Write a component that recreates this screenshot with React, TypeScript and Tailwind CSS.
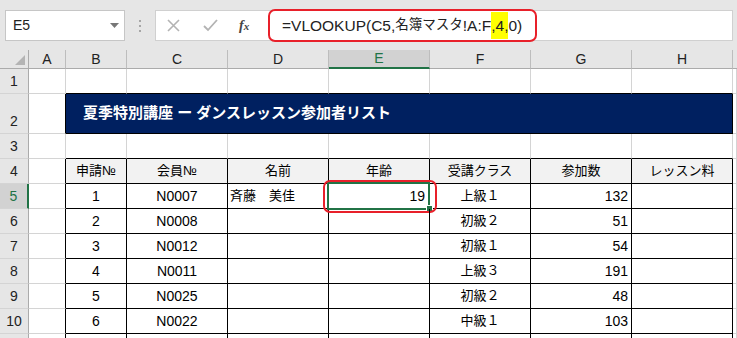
import { FC } from 'react';

const font = "font-['Liberation_Sans','Noto_Sans_CJK_JP',sans-serif]";

// widths of A..H, the row header comes first
const colW = ['w-[37px]', 'w-[61px]', 'w-[101px]', 'w-[101px]', 'w-[101px]', 'w-[101px]', 'w-[101px]', 'w-[101px]'];
const letters = ['A', 'B', 'C', 'D', 'E', 'F', 'G', 'H'];

const gray = 'border-r border-b border-[#d4d4d4]';
const black = 'border-r border-b border-black';
const blackBottom = 'border-r border-b border-r-[#d4d4d4] border-b-black';
const blackRight = 'border-r border-b border-r-black border-b-[#d4d4d4]';

const data = [
	['1', 'N0007', '斉藤　美佳', '19', '上級１', '132'],
	['2', 'N0008', '', '', '初級２', '51'],
	['3', 'N0012', '', '', '初級１', '54'],
	['4', 'N0011', '', '', '上級３', '191'],
	['5', 'N0025', '', '', '初級２', '48'],
	['6', 'N0022', '', '', '中級１', '103'],
];

const heads = ['申請№', '会員№', '名前', '年齢', '受講クラス', '参加数', 'レッスン料'];

const RowHead: FC<{ n: string; h: string; sel?: boolean; bottom?: boolean }> = ({ n, h, sel, bottom }) => (
	<div
		className={`w-[29px] shrink-0 ${h} flex justify-center text-[14px] border-b border-b-[#d4d4d4] ${
			bottom ? 'items-end pb-[1px]' : 'items-center'
		} ${
			sel
				? 'bg-[#d2d2d2] text-[#217346] border-r-2 border-r-[#217346]'
				: 'bg-[#e6e6e6] text-[#222] border-r border-r-[#ababab]'
		}`}
	>
		{n}
	</div>
);

const Toolbar: FC = () => (
	<div className="h-[50px] bg-[#e6e6e6] flex items-start pt-[10px] pl-[5px]">
		<div className="w-[120px] h-[31px] bg-white border border-[#c6c6c6] flex items-center justify-between pl-[7px] pr-[5px]">
			<span className="text-[14px] text-[#222]">E5</span>
			<svg width="9" height="5" viewBox="0 0 9 5">
				<path d="M0 0h9L4.5 5z" fill="#777" />
			</svg>
		</div>
		<div className="w-[30px] h-[31px] flex items-center justify-center">
			<svg width="3" height="12" viewBox="0 0 3 12">
				<rect x="0" y="0" width="2" height="2" fill="#a6a6a6" />
				<rect x="0" y="5" width="2" height="2" fill="#a6a6a6" />
				<rect x="0" y="10" width="2" height="2" fill="#a6a6a6" />
			</svg>
		</div>
		<div className="relative w-[578px] h-[31px] bg-white border border-[#d0d0d0] flex items-center">
			<div className="w-[112px] shrink-0 flex items-center">
				<svg className="ml-[11px]" width="13" height="13" viewBox="0 0 13 13">
					<path d="M1 1l11 11M12 1L1 12" stroke="#b3b3b3" strokeWidth="1.6" />
				</svg>
				<svg className="ml-[23px]" width="15" height="13" viewBox="0 0 15 13">
					<path d="M1 7l4 4 9-10" stroke="#b3b3b3" strokeWidth="1.8" fill="none" />
				</svg>
				<span className="ml-[21px] text-[14px] italic text-[#444] font-['Liberation_Serif',serif] font-bold">
					f<span className="text-[11px]">x</span>
				</span>
			</div>
			<div className="pl-[14px] text-[15.5px] text-[#222] flex items-center whitespace-nowrap">
				<span>=VLOOKUP(C5,</span>
				<span className="text-[13.5px]">名簿マスタ</span>
				<span>!A:F</span>
				<span className="inline-block h-[27px] leading-[27px] bg-[#ffff00]">,4,</span>
				<span>0)</span>
			</div>
			<div className="absolute left-[112px] top-[-2px] w-[269px] h-[33px] border-2 border-[#e8202a] rounded-[7px]" />
		</div>
	</div>
);

const App: FC = () => {
	return (
		<div className={`w-[737px] h-[338px] overflow-hidden bg-white ${font}`}>
			<Toolbar />

			{/* column headers */}
			<div className="flex h-[19px]">
				<div className="w-[29px] shrink-0 bg-[#e6e6e6] border-r border-b border-[#ababab] relative">
					<svg className="absolute right-[3px] bottom-[3px]" width="10" height="10" viewBox="0 0 10 10">
						<path d="M10 0v10H0z" fill="#b4b4b4" />
					</svg>
				</div>
				{letters.map((l, i) => (
					<div
						key={l}
						className={`${colW[i]} shrink-0 flex items-center justify-center text-[14px] border-r border-r-[#bdbdbd] ${
							l === 'E'
								? 'bg-[#d2d2d2] text-[#217346] border-b-2 border-b-[#217346]'
								: 'bg-[#e6e6e6] text-[#222] border-b border-b-[#ababab]'
						}`}
					>
						{l}
					</div>
				))}
				<div className="flex-1 bg-[#e6e6e6] border-b border-[#ababab]" />
			</div>

			{/* row 1 */}
			<div className="flex h-[25px]">
				<RowHead n="1" h="h-[25px]" />
				<div className={`${colW[0]} shrink-0 ${gray}`} />
				{colW.slice(1).map((w, i) => (
					<div key={i} className={`${w} shrink-0 ${blackBottom}`} />
				))}
				<div className={`flex-1 ${gray}`} />
			</div>

			{/* row 2: title */}
			<div className="flex h-[40px]">
				<RowHead n="2" h="h-[40px]" bottom />
				<div className={`${colW[0]} shrink-0 ${blackRight}`} />
				<div className={`w-[667px] shrink-0 ${black} bg-[#002060] flex items-center pl-[17px] text-white font-bold text-[15px]`}>
					夏季特別講座 ー ダンスレッスン参加者リスト
				</div>
				<div className={`flex-1 ${gray}`} />
			</div>

			{/* row 3 */}
			<div className="flex h-[25px]">
				<RowHead n="3" h="h-[25px]" />
				<div className={`${colW[0]} shrink-0 ${gray}`} />
				{colW.slice(1).map((w, i) => (
					<div key={i} className={`${w} shrink-0 ${blackBottom}`} />
				))}
				<div className={`flex-1 ${gray}`} />
			</div>

			{/* row 4: table head */}
			<div className="flex h-[25px]">
				<RowHead n="4" h="h-[25px]" />
				<div className={`${colW[0]} shrink-0 ${blackRight}`} />
				{heads.map((t, i) => (
					<div
						key={t}
						className={`${colW[i + 1]} shrink-0 ${black} bg-[#f2f2f2] flex items-center justify-center text-[13px] text-black`}
					>
						{t}
					</div>
				))}
				<div className={`flex-1 ${gray}`} />
			</div>

			{data.map((r, ri) => {
				const sel = ri === 0;
				return (
					<div key={ri} className="flex h-[25px]">
						<RowHead n={String(ri + 5)} h="h-[25px]" sel={sel} />
						<div className={`${colW[0]} shrink-0 ${blackRight}`} />
						<div className={`${colW[1]} shrink-0 ${black} flex items-center justify-center text-[14px]`}>{r[0]}</div>
						<div className={`${colW[2]} shrink-0 ${black} flex items-center justify-center text-[14px]`}>{r[1]}</div>
						<div className={`${colW[3]} shrink-0 ${black} flex items-center pl-[2px] text-[13px]`}>{r[2]}</div>
						<div className={`${colW[4]} shrink-0 ${black} relative flex items-center justify-end pr-[4px] text-[14px]`}>
							{r[3]}
							{sel && (
								<>
									<div className="absolute left-[-2px] top-[-2px] w-[103px] h-[28px] border-2 border-[#217346]" />
									<div className="absolute left-[98px] top-[22px] w-[5px] h-[5px] bg-[#217346] outline outline-1 outline-white" />
									<div className="absolute left-[-6px] top-[-4px] w-[114px] h-[33px] border-2 border-[#e8202a] rounded-[7px]" />
								</>
							)}
						</div>
						<div className={`${colW[5]} shrink-0 ${black} flex items-center justify-center text-[13px]`}>{r[4]}</div>
						<div className={`${colW[6]} shrink-0 ${black} flex items-center justify-end pr-[3px] text-[14px]`}>{r[5]}</div>
						<div className={`${colW[7]} shrink-0 ${black}`} />
						<div className={`flex-1 ${gray}`} />
					</div>
				);
			})}

			{/* row 11, cut off at the window edge */}
			<div className="flex h-[25px]">
				<RowHead n="" h="h-[25px]" />
				<div className={`${colW[0]} shrink-0 ${blackRight}`} />
				{colW.slice(1).map((w, i) => (
					<div key={i} className={`${w} shrink-0 ${black}`} />
				))}
				<div className={`flex-1 ${gray}`} />
			</div>
		</div>
	);
};

export default App;
